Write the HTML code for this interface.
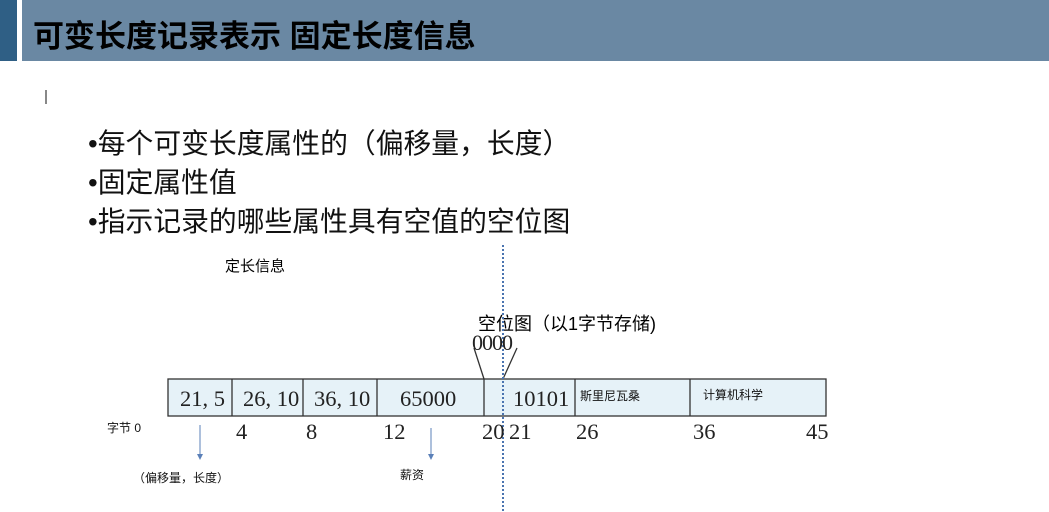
<!DOCTYPE html>
<html><head><meta charset="utf-8"><style>
body{margin:0;width:1049px;height:512px;background:#fff;position:relative;overflow:hidden;font-family:"Liberation Sans","Noto Sans CJK SC",sans-serif}
.a{position:absolute;white-space:nowrap}
.s{font-family:"Liberation Serif","Noto Serif CJK SC",serif;font-size:22.5px;color:#222}
.c{font-size:12px;color:#111}
.b{font-size:27.8px;color:#111}
</style></head><body>
<div class="a" style="left:0;top:0;width:17px;height:61px;background:#2f5f85"></div>
<div class="a" style="left:22px;top:0;width:1027px;height:61px;background:#6a88a3"></div>
<div class="a" style="left:33px;top:11px;font-size:31px;font-weight:bold;color:#000">可变长度记录表示 固定长度信息</div>
<div class="a" style="left:45px;top:90px;width:2px;height:14px;background:#888"></div>
<div class="a b" style="left:88px;top:122px">•每个可变长度属性的（偏移量，长度）</div>
<div class="a b" style="left:88px;top:161px">•固定属性值</div>
<div class="a b" style="left:88px;top:200px">•指示记录的哪些属性具有空值的空位图</div>
<div class="a" style="left:225px;top:255px;font-size:15px">定长信息</div>
<div class="a" style="left:478px;top:310px;font-size:18px">空位图（以1字节存储)</div>
<svg class="a" style="left:0;top:0" width="1049" height="512">
<rect x="168" y="379" width="658" height="37" fill="#e6f2f8" stroke="#333" stroke-width="1.3"/>
<g stroke="#333" stroke-width="1.3">
<line x1="232" y1="379" x2="232" y2="416"/><line x1="303" y1="379" x2="303" y2="416"/>
<line x1="377" y1="379" x2="377" y2="416"/><line x1="484" y1="379" x2="484" y2="416"/>
<line x1="575" y1="379" x2="575" y2="416"/><line x1="690" y1="379" x2="690" y2="416"/>
<line x1="474" y1="348" x2="484" y2="379"/><line x1="517" y1="348" x2="503" y2="379"/>
</g>
<line x1="503" y1="245" x2="503" y2="512" stroke="#4a74b0" stroke-width="2" stroke-dasharray="2,2"/>
<g stroke="#5b80b8" stroke-width="1"><line x1="200" y1="425" x2="200" y2="455"/><line x1="431" y1="428" x2="431" y2="455"/></g>
<polygon points="197,454 203,454 200,460" fill="#5b80b8"/><polygon points="428,454 434,454 431,460" fill="#5b80b8"/>
</svg>
<div class="a s" style="left:472px;top:330px;font-size:22px;letter-spacing:-1px">0000</div>
<div class="a s" style="left:180px;top:386px">21, 5</div>
<div class="a s" style="left:243px;top:386px">26, 10</div>
<div class="a s" style="left:314px;top:386px">36, 10</div>
<div class="a s" style="left:400px;top:386px">65000</div>
<div class="a s" style="left:513px;top:386px">10101</div>
<div class="a c" style="left:580px;top:387px">斯里尼瓦桑</div>
<div class="a c" style="left:703px;top:386px">计算机科学</div>
<div class="a s" style="left:236px;top:419px">4</div>
<div class="a s" style="left:306px;top:419px">8</div>
<div class="a s" style="left:383px;top:419px">12</div>
<div class="a s" style="left:482px;top:419px">20</div>
<div class="a s" style="left:509px;top:419px">21</div>
<div class="a s" style="left:576px;top:419px">26</div>
<div class="a s" style="left:693px;top:419px">36</div>
<div class="a s" style="left:806px;top:419px">45</div>
<div class="a c" style="left:107px;top:419px">字节 0</div>
<div class="a c" style="left:133px;top:469px">（偏移量，长度）</div>
<div class="a c" style="left:400px;top:466px">薪资</div>
</body></html>
